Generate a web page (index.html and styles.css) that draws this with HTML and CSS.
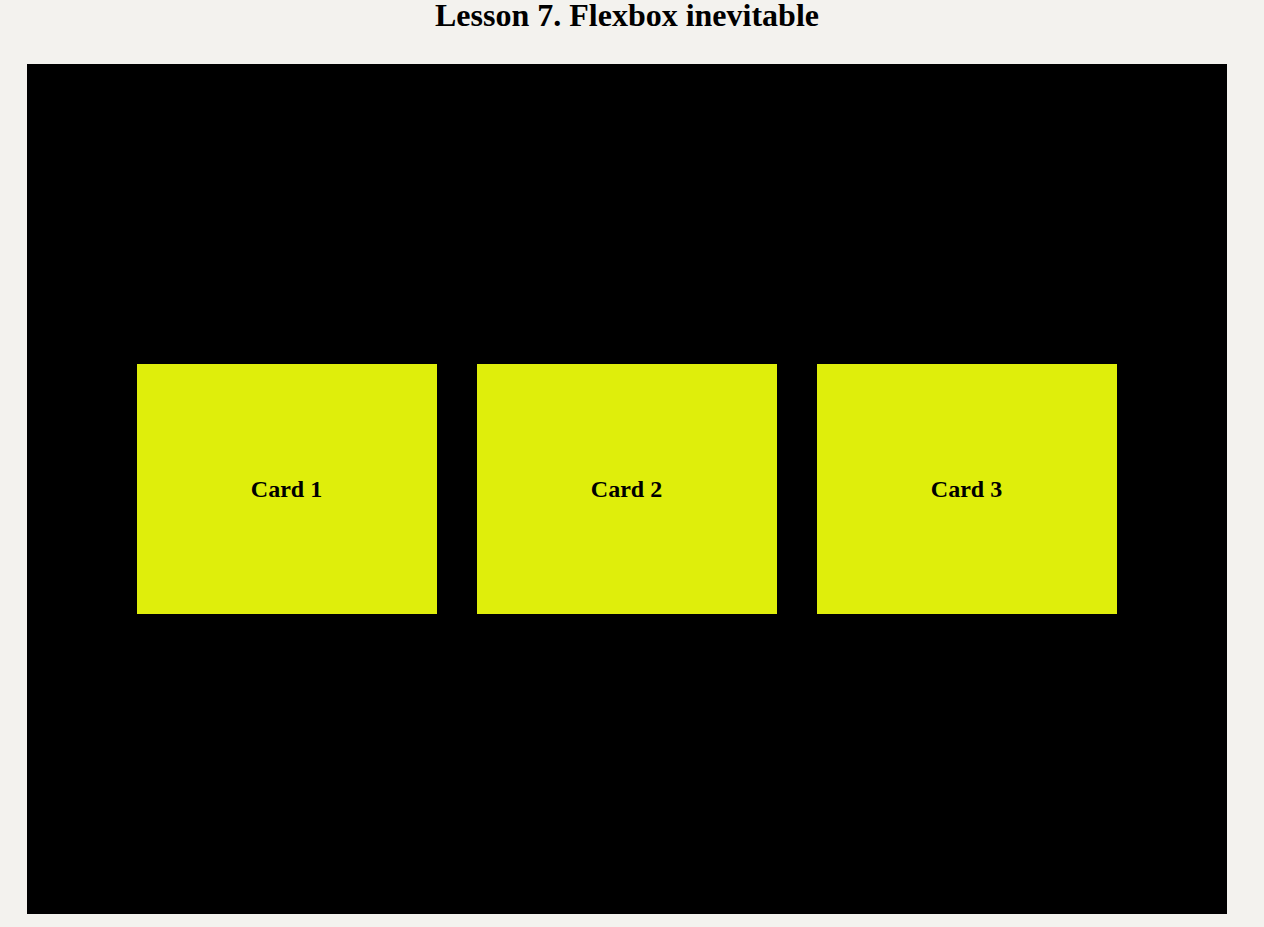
FILE: index.html
```html
<!DOCTYPE html>
<html lang="en">
<head>
<meta charset="utf-8">
<title>Lesson 7. Flexbox inevitable</title>
<link rel="stylesheet" href="styles.css">
</head>
<body>
<h1 class="title">Lesson 7. Flexbox inevitable</h1>
<div class="stage">
  <div class="card"><h2 class="card-title">Card 1</h2></div>
  <div class="card"><h2 class="card-title">Card 2</h2></div>
  <div class="card"><h2 class="card-title">Card 3</h2></div>
</div>
</body>
</html>
```
FILE: styles.css
```css
html, body {
  margin: 0;
}
body {
  background: #f3f2ee;
  font-family: "Liberation Serif", "Times New Roman", serif;
  color: #000;
  padding: 0 10px 0 0;
}
.title {
  margin: 0 0 33px;
  font-size: 32px;
  font-weight: bold;
  text-align: center;
  line-height: 31px;
}
.stage {
  width: 1200px;
  height: 850px;
  margin: 0 auto;
  background: #000;
  display: flex;
  justify-content: center;
  align-items: center;
  gap: 40px;
}
.card {
  width: 300px;
  height: 250px;
  background: #dfee0b;
  display: flex;
  justify-content: center;
  align-items: center;
}
.card-title {
  margin: 0 1px 0 0;
  font-size: 24px;
  font-weight: bold;
}
```
